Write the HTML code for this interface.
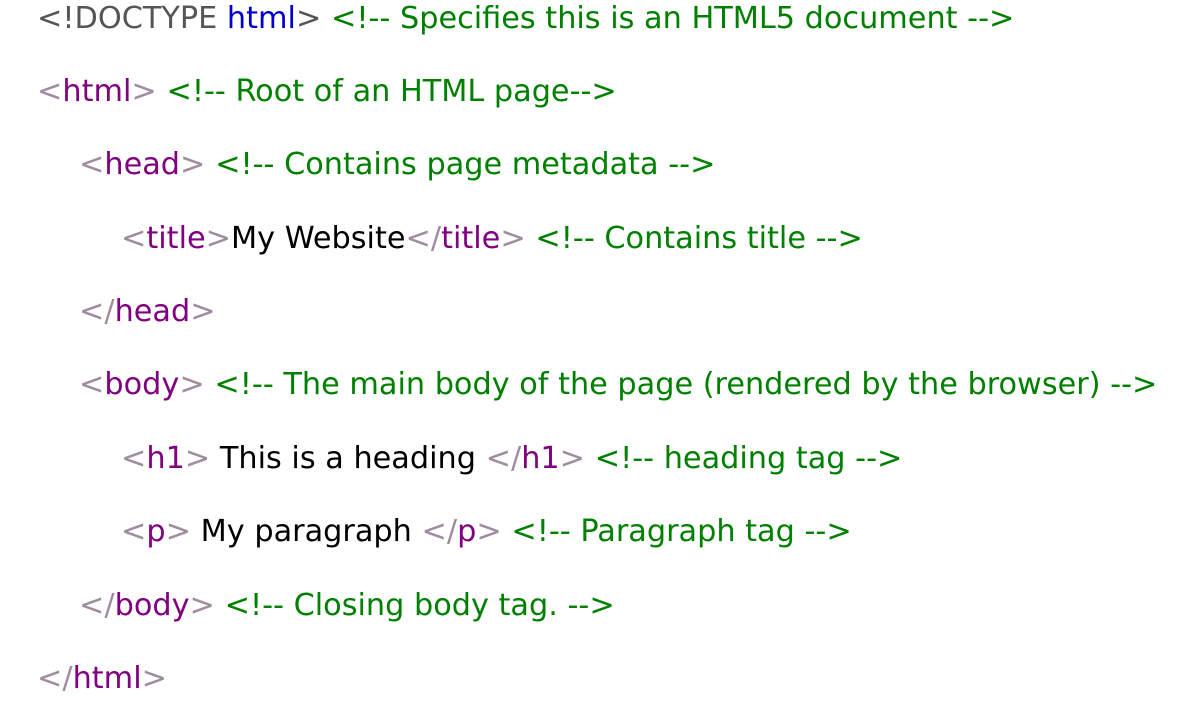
<!DOCTYPE html>
<html><head><style>
body{margin:0;background:#fff;width:1180px;height:709px;overflow:hidden;font-family:"DejaVu Sans","Liberation Sans",sans-serif;font-size:30.3px;}
.l{position:absolute;white-space:pre;line-height:36px;margin-top:1px;}
.b{color:#a08ca0}.t{color:#800080}.c{color:#008000}.g{color:#555}.k{color:#0000cc}.x{color:#000}
</style></head><body>
<div class="l" style="left:37px;top:0px"><span class="g">&lt;!DOCTYPE </span><span class="k">html</span><span class="g">&gt;</span> <span class="c">&lt;!-- Specifies this is an HTML5 document --&gt;</span></div>
<div class="l" style="left:37px;top:73px"><span class="b">&lt;</span><span class="t">html</span><span class="b">&gt;</span> <span class="c">&lt;!-- Root of an HTML page--&gt;</span></div>
<div class="l" style="left:79px;top:146px"><span class="b">&lt;</span><span class="t">head</span><span class="b">&gt;</span> <span class="c">&lt;!-- Contains page metadata --&gt;</span></div>
<div class="l" style="left:121px;top:220px"><span class="b">&lt;</span><span class="t">title</span><span class="b">&gt;</span><span class="x">My Website</span><span class="b">&lt;/</span><span class="t">title</span><span class="b">&gt;</span> <span class="c">&lt;!-- Contains title --&gt;</span></div>
<div class="l" style="left:79px;top:293px"><span class="b">&lt;/</span><span class="t">head</span><span class="b">&gt;</span></div>
<div class="l" style="left:79px;top:366px"><span class="b">&lt;</span><span class="t">body</span><span class="b">&gt;</span> <span class="c">&lt;!-- The main body of the page (rendered by the browser) --&gt;</span></div>
<div class="l" style="left:121px;top:440px"><span class="b">&lt;</span><span class="t">h1</span><span class="b">&gt;</span><span class="x"> This is a heading </span><span class="b">&lt;/</span><span class="t">h1</span><span class="b">&gt;</span> <span class="c">&lt;!-- heading tag --&gt;</span></div>
<div class="l" style="left:121px;top:513px"><span class="b">&lt;</span><span class="t">p</span><span class="b">&gt;</span><span class="x"> My paragraph </span><span class="b">&lt;/</span><span class="t">p</span><span class="b">&gt;</span> <span class="c">&lt;!-- Paragraph tag --&gt;</span></div>
<div class="l" style="left:79px;top:587px"><span class="b">&lt;/</span><span class="t">body</span><span class="b">&gt;</span> <span class="c">&lt;!-- Closing body tag. --&gt;</span></div>
<div class="l" style="left:37px;top:660px"><span class="b">&lt;/</span><span class="t">html</span><span class="b">&gt;</span></div>
</body></html>
